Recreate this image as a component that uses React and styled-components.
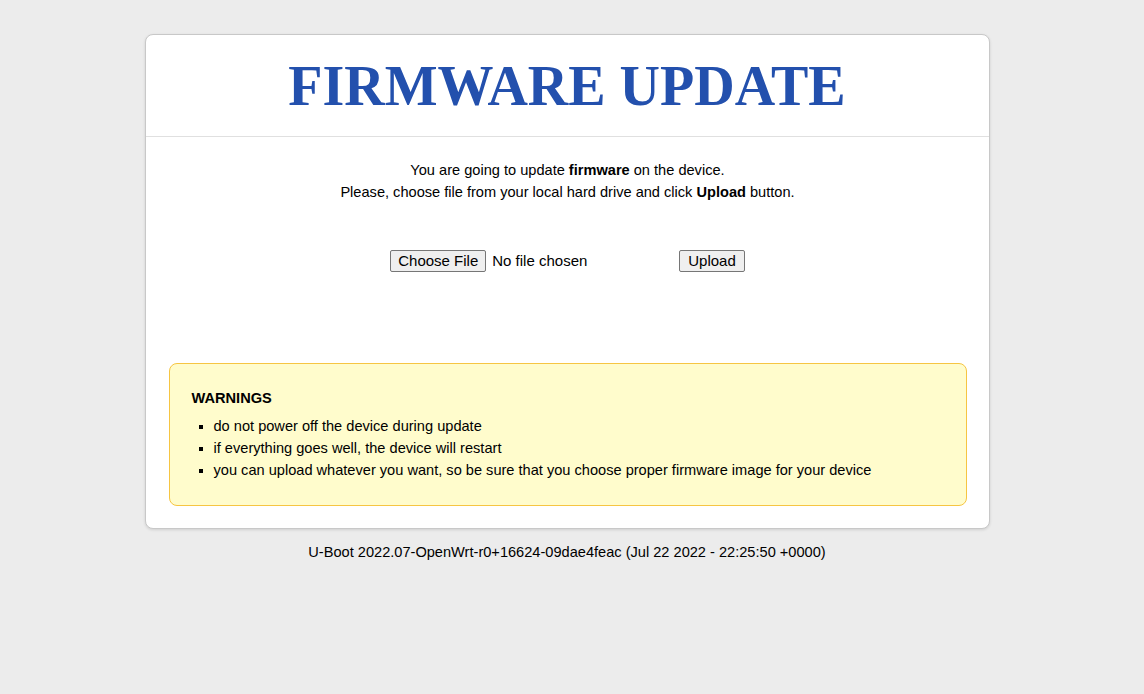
import React from "react";
import styled, { createGlobalStyle } from "styled-components";

const Global = createGlobalStyle`
  html, body { margin: 0; padding: 0; background: #ececec; }
  body { font-family: "Liberation Sans", Arial, sans-serif; font-size: 14.6px; color: #000; }
`;

const Page = styled.div`
  display: flex;
  flex-direction: column;
  align-items: center;
  padding: 34px 10px 0 0;
`;

const Card = styled.div`
  width: 843px;
  background: #fff;
  border: 1px solid #c8c8c8;
  border-radius: 8px;
  box-shadow: 0 1px 3px rgba(0, 0, 0, 0.12);
  overflow: hidden;
`;

const Header = styled.div`
  border-bottom: 1px solid #e0e0e0;
  height: 101px;
  display: flex;
  align-items: center;
  justify-content: center;
`;

const Title = styled.h1`
  margin: 0;
  font-family: "Liberation Serif", "Times New Roman", serif;
  font-weight: bold;
  font-size: 56px;
  color: #2350ad;
  line-height: 1;
`;

const Body = styled.div`
  padding: 22px 22px 22px 23px;
`;

const Intro = styled.p`
  margin: 0;
  text-align: center;
  line-height: 22px;
`;

const Form = styled.form`
  display: flex;
  justify-content: center;
  align-items: center;
  margin-top: 46px;
  height: 24px;
  gap: 36px;
`;

const buttonLook = `
  font-family: "Liberation Sans", Arial, sans-serif;
  font-size: 15px;
  color: #000;
  background: #efefef;
  border: 1px solid #767676;
  border-radius: 2px;
  padding: 2px 7px;
  line-height: 16px;
`;

const FileInput = styled.input`
  font-family: "Liberation Sans", Arial, sans-serif;
  font-size: 15px;
  width: 253px;
  &::file-selector-button {
    ${buttonLook}
    margin-right: 6px;
  }
`;

const Button = styled.button`
  ${buttonLook}
  padding: 2px 8px;
`;

const Warning = styled.div`
  margin-top: 90px;
  background: #fffccc;
  border: 1px solid #f6c542;
  border-radius: 8px;
  padding: 24px 22px 24px;
`;

const WarnTitle = styled.div`
  font-weight: bold;
  line-height: 20px;
  margin-bottom: 7px;
`;

const List = styled.ul`
  margin: 0;
  padding-left: 22px;
  list-style: square;
`;

const Item = styled.li`
  line-height: 22px;
`;

const Footer = styled.div`
  margin-top: 14px;
  text-align: center;
  line-height: 18px;
`;

export default function App() {
  return (
    <>
      <Global />
      <Page>
        <Card>
          <Header>
            <Title>FIRMWARE UPDATE</Title>
          </Header>
          <Body>
            <Intro>
              You are going to update <b>firmware</b> on the device.
              <br />
              Please, choose file from your local hard drive and click <b>Upload</b> button.
            </Intro>
            <Form onSubmit={(e) => e.preventDefault()}>
              <FileInput type="file" name="firmware" />
              <Button type="submit">Upload</Button>
            </Form>
            <Warning>
              <WarnTitle>WARNINGS</WarnTitle>
              <List>
                <Item>do not power off the device during update</Item>
                <Item>if everything goes well, the device will restart</Item>
                <Item>you can upload whatever you want, so be sure that you choose proper firmware image for your device</Item>
              </List>
            </Warning>
          </Body>
        </Card>
        <Footer>U-Boot 2022.07-OpenWrt-r0+16624-09dae4feac (Jul 22 2022 - 22:25:50 +0000)</Footer>
      </Page>
    </>
  );
}
